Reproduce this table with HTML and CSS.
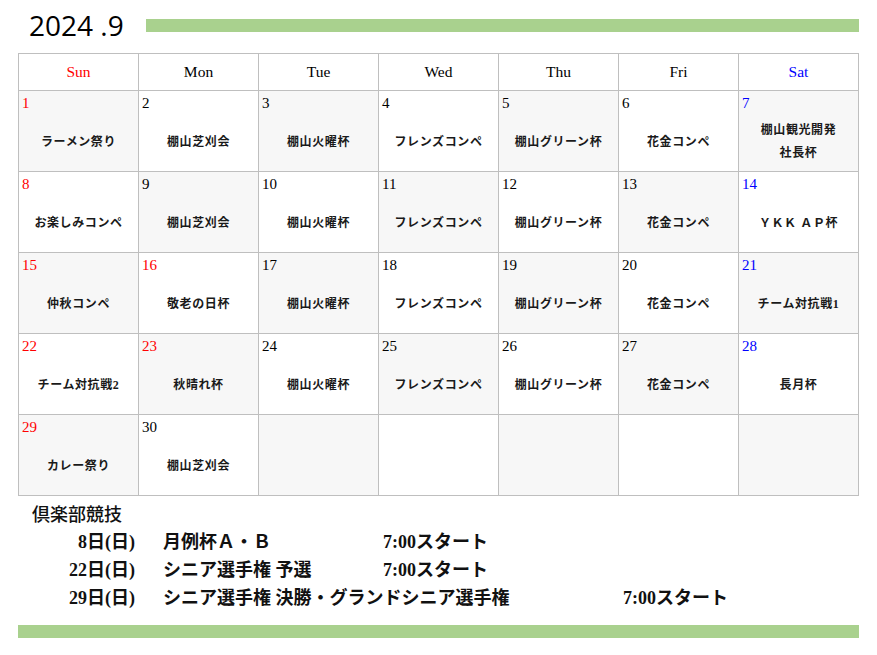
FILE: index.html
```html
<!DOCTYPE html>
<html lang="ja">
<head>
<meta charset="utf-8">
<link rel="stylesheet" href="styles.css">
</head>
<body>
<div class="page">
  <div class="top">
    <div class="title">2024 .9</div>
    <div class="bar"></div>
  </div>
  <table class="cal">
    <thead>
      <tr>
        <th class="sun">Sun</th><th>Mon</th><th>Tue</th><th>Wed</th><th>Thu</th><th>Fri</th><th class="sat">Sat</th>
      </tr>
    </thead>
    <tbody>
      <tr>
        <td class="g"><div class="num sun">1</div><div class="ev">ラーメン祭り</div></td>
        <td><div class="num">2</div><div class="ev">棚山芝刈会</div></td>
        <td class="g"><div class="num">3</div><div class="ev">棚山火曜杯</div></td>
        <td><div class="num">4</div><div class="ev">フレンズコンペ</div></td>
        <td class="g"><div class="num">5</div><div class="ev">棚山グリーン杯</div></td>
        <td><div class="num">6</div><div class="ev">花金コンペ</div></td>
        <td class="g"><div class="num sat">7</div><div class="ev">棚山観光開発<br>社長杯</div></td>
      </tr>
      <tr>
        <td><div class="num sun">8</div><div class="ev">お楽しみコンペ</div></td>
        <td class="g"><div class="num">9</div><div class="ev">棚山芝刈会</div></td>
        <td><div class="num">10</div><div class="ev">棚山火曜杯</div></td>
        <td class="g"><div class="num">11</div><div class="ev">フレンズコンペ</div></td>
        <td><div class="num">12</div><div class="ev">棚山グリーン杯</div></td>
        <td class="g"><div class="num">13</div><div class="ev">花金コンペ</div></td>
        <td><div class="num sat">14</div><div class="ev">ＹＫＫ ＡＰ杯</div></td>
      </tr>
      <tr>
        <td class="g"><div class="num sun">15</div><div class="ev">仲秋コンペ</div></td>
        <td><div class="num sun">16</div><div class="ev">敬老の日杯</div></td>
        <td class="g"><div class="num">17</div><div class="ev">棚山火曜杯</div></td>
        <td><div class="num">18</div><div class="ev">フレンズコンペ</div></td>
        <td class="g"><div class="num">19</div><div class="ev">棚山グリーン杯</div></td>
        <td><div class="num">20</div><div class="ev">花金コンペ</div></td>
        <td class="g"><div class="num sat">21</div><div class="ev">チーム対抗戦1</div></td>
      </tr>
      <tr>
        <td><div class="num sun">22</div><div class="ev">チーム対抗戦2</div></td>
        <td class="g"><div class="num sun">23</div><div class="ev">秋晴れ杯</div></td>
        <td><div class="num">24</div><div class="ev">棚山火曜杯</div></td>
        <td class="g"><div class="num">25</div><div class="ev">フレンズコンペ</div></td>
        <td><div class="num">26</div><div class="ev">棚山グリーン杯</div></td>
        <td class="g"><div class="num">27</div><div class="ev">花金コンペ</div></td>
        <td><div class="num sat">28</div><div class="ev">長月杯</div></td>
      </tr>
      <tr>
        <td class="g"><div class="num sun">29</div><div class="ev">カレー祭り</div></td>
        <td><div class="num">30</div><div class="ev">棚山芝刈会</div></td>
        <td class="g"></td>
        <td></td>
        <td class="g"></td>
        <td></td>
        <td class="g"></td>
      </tr>
    </tbody>
  </table>
  <div class="club">
    <div class="club-title">倶楽部競技</div>
    <div class="row"><span class="date">8日(日)</span><span class="name">月例杯Ａ・Ｂ</span><span class="time">7:00スタート</span></div>
    <div class="row"><span class="date">22日(日)</span><span class="name">シニア選手権 予選</span><span class="time">7:00スタート</span></div>
    <div class="row"><span class="date">29日(日)</span><span class="name wide">シニア選手権 決勝・グランドシニア選手権</span><span class="time">7:00スタート</span></div>
  </div>
  <div class="bar bottom-bar"></div>
</div>
</body>
</html>
```

FILE: styles.css
```css
html, body {
  margin: 0;
  padding: 0;
  background: #ffffff;
}

.page {
  width: 841px;
  padding: 0 18px;
  font-family: "Liberation Serif", "Noto Sans CJK JP", serif;
  color: #111;
}

.top {
  display: flex;
  align-items: center;
  height: 50px;
  margin-bottom: 3px;
}

.title {
  font-family: "Open Sans", "DejaVu Sans", sans-serif;
  font-size: 28px;
  line-height: 1;
  padding-left: 11px;
  color: #000;
}

.bar {
  background: #a9d18e;
  height: 13px;
}

.top .bar {
  flex: 1;
  margin-left: 22px;
}

.cal {
  border-collapse: collapse;
  table-layout: fixed;
  width: 841px;
}

.cal th,
.cal td {
  border: 1px solid #bfbfbf;
  padding: 0;
}

.cal th {
  height: 36px;
  font-weight: normal;
  font-size: 15.5px;
  text-align: center;
  vertical-align: middle;
  color: #000;
}

.cal td {
  height: 80px;
  vertical-align: top;
}

.cal td.g {
  background: #f7f7f7;
}

.sun {
  color: #ff0000 !important;
}

.sat {
  color: #0000ff !important;
}

.num {
  font-size: 15px;
  line-height: 17px;
  padding: 4px 3px 0;
  height: 18px;
  color: #000;
}

.ev {
  height: 58px;
  display: flex;
  align-items: center;
  justify-content: center;
  text-align: center;
  font-weight: 600;
  font-size: 12px;
  letter-spacing: 0.6px;
  line-height: 23px;
  color: #1a1a1a;
}

.club {
  padding-top: 6px;
  font-size: 18px;
  font-weight: 500;
  color: #111;
}

.club-title {
  padding-left: 14px;
  line-height: 26px;
  height: 26px;
}

.row {
  display: flex;
  line-height: 28px;
  height: 28px;
  font-weight: 600;
}

.date {
  width: 117px;
  text-align: right;
}

.name {
  margin-left: 28px;
  width: 220px;
}

.name.wide {
  width: 460px;
}

.bottom-bar {
  margin-top: 13px;
  width: 841px;
}
```
